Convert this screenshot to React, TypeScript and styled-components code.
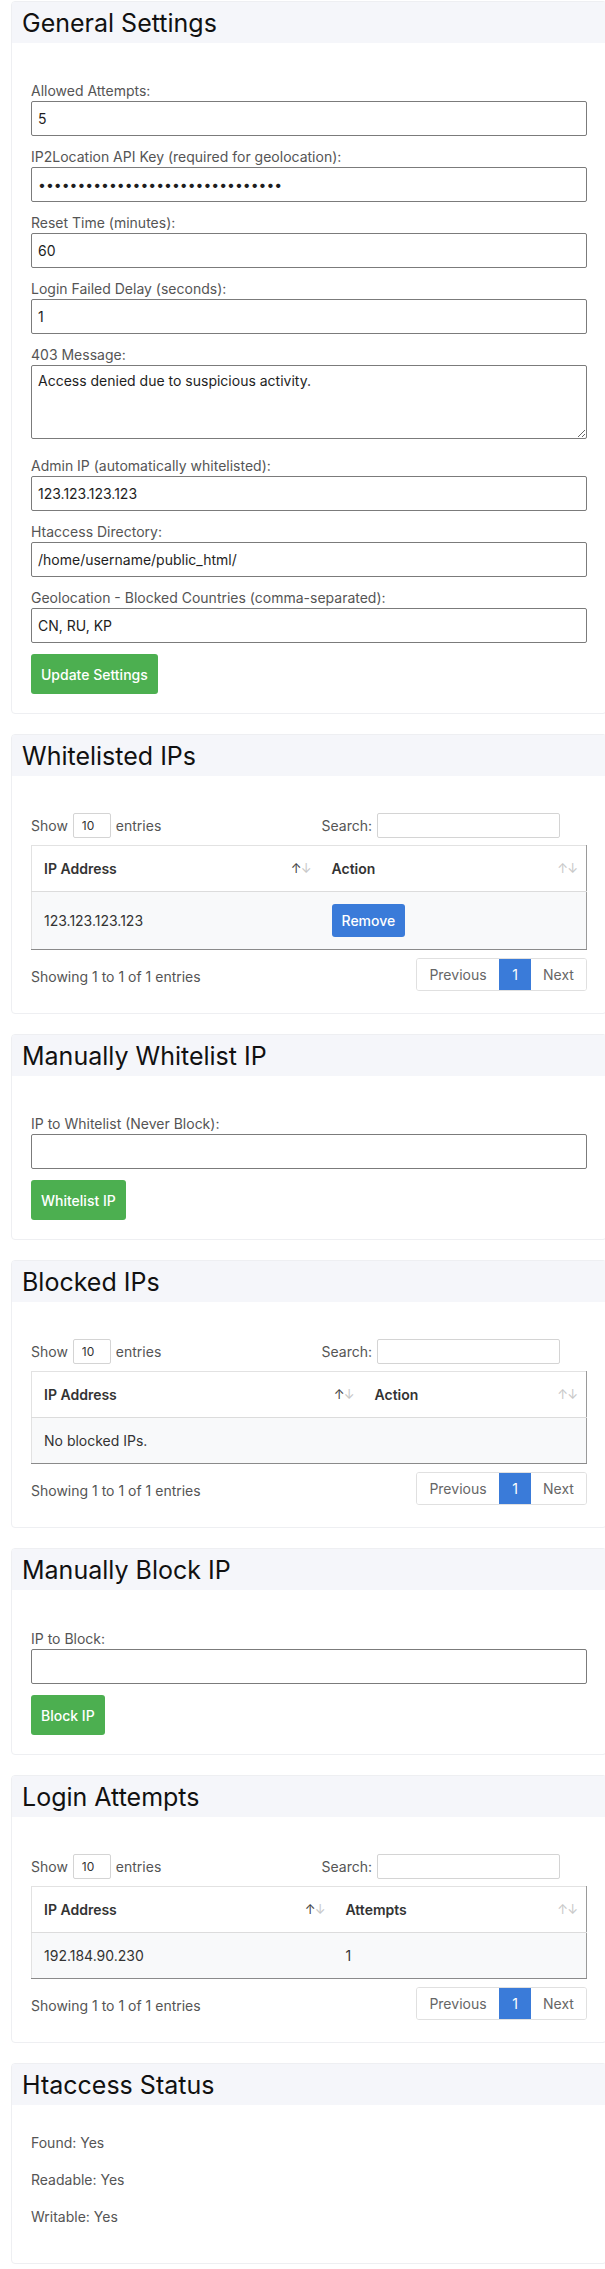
import React from "react";
import styled, { createGlobalStyle } from "styled-components";

const GlobalStyle = createGlobalStyle`
  html, body {
    margin: 0;
    padding: 0;
    background: #ffffff;
    overflow-x: hidden;
  }
  body {
    font-family: Inter, "Noto Sans", "Liberation Sans", sans-serif;
    font-size: 14px;
    color: #333;
  }
  * {
    box-sizing: border-box;
  }
`;

const Page = styled.div`
  width: 605px;
  overflow: hidden;
  padding: 1px 0 5px 11px;
`;

const Card = styled.section`
  width: 596px;
  background: #fff;
  border: 1px solid #eeeff2;
  border-radius: 4px;
  margin-bottom: 20px;
  overflow: hidden;
`;

const CardHeader = styled.h2`
  margin: 0;
  padding: 6px 10px 5px;
  background: #f5f6fa;
  font-size: 25px;
  font-weight: 400;
  line-height: 30px;
  color: #111;
`;

const CardBody = styled.div<{ $top?: number; $bottom?: number }>`
  padding: ${({ $top }) => $top ?? 38}px 19px ${({ $bottom }) => $bottom ?? 19}px;
`;

const Field = styled.div<{ $gap?: number }>`
  margin-bottom: ${({ $gap }) => $gap ?? 11}px;
`;

const Label = styled.label`
  display: block;
  line-height: 20px;
  font-size: 14px;
  color: #555;
`;

const TextInput = styled.input`
  display: block;
  width: 100%;
  height: 35px;
  margin: 0;
  padding: 0 6px;
  border: 1px solid #7b7b7b;
  border-radius: 2px;
  font-family: Inter, "Noto Sans", sans-serif;
  font-size: 14px;
  color: #1e1e1e;
  background: #fff;
  outline: none;
`;

const TextArea = styled.textarea`
  display: block;
  width: 100%;
  height: 74px;
  margin: 0;
  padding: 5px 6px;
  border: 1px solid #7b7b7b;
  border-radius: 2px;
  font-family: Inter, "Noto Sans", sans-serif;
  font-size: 14px;
  line-height: 20px;
  color: #1e1e1e;
  outline: none;
`;

const Button = styled.button<{ $tone?: "green" | "blue"; $h?: number }>`
  display: inline-flex;
  align-items: center;
  justify-content: center;
  height: ${({ $h }) => $h ?? 40}px;
  padding: 0 10px;
  border: none;
  border-radius: 3px;
  background: ${({ $tone }) => ($tone === "blue" ? "#3a7bd9" : "#4caf50")};
  color: #fff;
  font-family: Inter, "Noto Sans", sans-serif;
  font-size: 14px;
  font-weight: 500;
  cursor: pointer;
`;

const Toolbar = styled.div`
  display: flex;
  align-items: center;
  justify-content: space-between;
  height: 25px;
  color: #555;
`;

const Inline = styled.div<{ $right?: number }>`
  display: flex;
  align-items: center;
  margin-right: ${({ $right }) => $right ?? 0}px;
`;

const LengthSelect = styled.select`
  appearance: none;
  width: 38px;
  height: 25px;
  margin: 0 5px;
  padding: 0 0 0 8px;
  border: 1px solid #d4d4d4;
  border-radius: 2px;
  background: #fff;
  font-family: Inter, "Noto Sans", sans-serif;
  font-size: 12px;
  color: #333;
`;

const SearchInput = styled.input`
  width: 183px;
  height: 25px;
  margin-left: 5px;
  border: 1px solid #d4d4d4;
  border-radius: 2px;
  outline: none;
`;

const Table = styled.table`
  width: 100%;
  margin-top: 7px;
  border-collapse: collapse;
  table-layout: fixed;
  border-top: 1px solid #e2e2e2;
  border-left: 1px solid #e2e2e2;
  border-right: 1px solid #9a9a9a;
  border-bottom: 1px solid #8a8a8a;
`;

const Th = styled.th<{ $width?: number }>`
  width: ${({ $width }) => ($width ? `${$width}px` : "auto")};
  padding: 12px 9px 12px 12px;
  text-align: left;
  font-weight: 600;
  line-height: 21px;
  color: #333;
  background: #fff;
  border-bottom: 1px solid #dcdcdc;
`;

const ThInner = styled.div`
  display: flex;
  justify-content: space-between;
  align-items: center;
  height: 21px;
`;

const SortIcon = styled.span`
  display: inline-flex;
  font-size: 13px;
  font-weight: 400;
  letter-spacing: -1px;
`;

const Arrow = styled.span<{ $on?: boolean }>`
  color: ${({ $on }) => ($on ? "#444" : "#c8c8c8")};
`;

const Td = styled.td`
  padding: 12px;
  height: 46px;
  line-height: 21px;
  color: #333;
  background: #f8f9fa;
  vertical-align: middle;
`;

const TableFooter = styled.div`
  display: flex;
  justify-content: space-between;
  align-items: flex-start;
  margin-top: 8px;
`;

const Info = styled.div`
  padding-top: 9px;
  line-height: 20px;
  color: #555;
`;

const Pager = styled.div`
  display: flex;
  height: 33px;
  border: 1px solid #e0e0e0;
  border-radius: 3px;
  overflow: hidden;
`;

const PageButton = styled.span<{ $active?: boolean; $w: number }>`
  display: flex;
  align-items: center;
  justify-content: center;
  width: ${({ $w }) => $w}px;
  background: ${({ $active }) => ($active ? "#3a7bd9" : "#fff")};
  color: ${({ $active }) => ($active ? "#fff" : "#666")};
  font-size: 14px;
`;

const StatusLine = styled.p`
  margin: 0 0 16px;
  line-height: 21px;
  color: #555;
`;

type Column = { title: string; width?: number; sorted?: boolean };

const SortArrows = ({ sorted }: { sorted?: boolean }) => (
  <SortIcon>
    <Arrow $on={sorted}>↑</Arrow>
    <Arrow>↓</Arrow>
  </SortIcon>
);

const DataTable = ({
  columns,
  children,
}: {
  columns: Column[];
  children: React.ReactNode;
}) => (
  <>
    <Toolbar>
      <Inline>
        Show
        <LengthSelect defaultValue="10">
          <option value="10">10</option>
        </LengthSelect>
        entries
      </Inline>
      <Inline $right={27}>
        Search:
        <SearchInput type="search" />
      </Inline>
    </Toolbar>
    <Table>
      <thead>
        <tr>
          {columns.map((c) => (
            <Th key={c.title} $width={c.width}>
              <ThInner>
                {c.title}
                <SortArrows sorted={c.sorted} />
              </ThInner>
            </Th>
          ))}
        </tr>
      </thead>
      <tbody>{children}</tbody>
    </Table>
    <TableFooter>
      <Info>Showing 1 to 1 of 1 entries</Info>
      <Pager>
        <PageButton $w={82}>Previous</PageButton>
        <PageButton $w={32} $active>
          1
        </PageButton>
        <PageButton $w={55}>Next</PageButton>
      </Pager>
    </TableFooter>
  </>
);

const settings = [
  { label: "Allowed Attempts:", value: "5" },
  {
    label: "IP2Location API Key (required for geolocation):",
    value: "abcdefghijklmnopqrstuvwxyz12345",
    type: "password",
  },
  { label: "Reset Time (minutes):", value: "60" },
  { label: "Login Failed Delay (seconds):", value: "1" },
];

const moreSettings = [
  { label: "Admin IP (automatically whitelisted):", value: "123.123.123.123" },
  { label: "Htaccess Directory:", value: "/home/username/public_html/" },
  {
    label: "Geolocation - Blocked Countries (comma-separated):",
    value: "CN, RU, KP",
  },
];

export default function App() {
  return (
    <>
      <GlobalStyle />
      <Page>
        <Card>
          <CardHeader>General Settings</CardHeader>
          <CardBody $top={38}>
            {settings.map((s) => (
              <Field key={s.label}>
                <Label>{s.label}</Label>
                <TextInput type={s.type ?? "text"} defaultValue={s.value} />
              </Field>
            ))}
            <Field $gap={17}>
              <Label>403 Message:</Label>
              <TextArea defaultValue="Access denied due to suspicious activity." />
            </Field>
            {moreSettings.map((s) => (
              <Field key={s.label}>
                <Label>{s.label}</Label>
                <TextInput type="text" defaultValue={s.value} />
              </Field>
            ))}
            <Button>Update Settings</Button>
          </CardBody>
        </Card>

        <Card>
          <CardHeader>Whitelisted IPs</CardHeader>
          <CardBody $top={37} $bottom={22}>
            <DataTable
              columns={[
                { title: "IP Address", width: 288, sorted: true },
                { title: "Action" },
              ]}
            >
              <tr>
                <Td>123.123.123.123</Td>
                <Td>
                  <Button $tone="blue" $h={33}>
                    Remove
                  </Button>
                </Td>
              </tr>
            </DataTable>
          </CardBody>
        </Card>

        <Card>
          <CardHeader>Manually Whitelist IP</CardHeader>
          <CardBody>
            <Field>
              <Label>IP to Whitelist (Never Block):</Label>
              <TextInput type="text" />
            </Field>
            <Button>Whitelist IP</Button>
          </CardBody>
        </Card>

        <Card>
          <CardHeader>Blocked IPs</CardHeader>
          <CardBody $top={37} $bottom={22}>
            <DataTable
              columns={[
                { title: "IP Address", width: 331, sorted: true },
                { title: "Action" },
              ]}
            >
              <tr>
                <Td colSpan={2}>No blocked IPs.</Td>
              </tr>
            </DataTable>
          </CardBody>
        </Card>

        <Card>
          <CardHeader>Manually Block IP</CardHeader>
          <CardBody $top={39}>
            <Field>
              <Label>IP to Block:</Label>
              <TextInput type="text" />
            </Field>
            <Button>Block IP</Button>
          </CardBody>
        </Card>

        <Card>
          <CardHeader>Login Attempts</CardHeader>
          <CardBody $top={37} $bottom={22}>
            <DataTable
              columns={[
                { title: "IP Address", width: 302, sorted: true },
                { title: "Attempts" },
              ]}
            >
              <tr>
                <Td>192.184.90.230</Td>
                <Td>1</Td>
              </tr>
            </DataTable>
          </CardBody>
        </Card>

        <Card>
          <CardHeader>Htaccess Status</CardHeader>
          <CardBody $top={27} $bottom={20}>
            <StatusLine>Found: Yes</StatusLine>
            <StatusLine>Readable: Yes</StatusLine>
            <StatusLine>Writable: Yes</StatusLine>
          </CardBody>
        </Card>
      </Page>
    </>
  );
}
